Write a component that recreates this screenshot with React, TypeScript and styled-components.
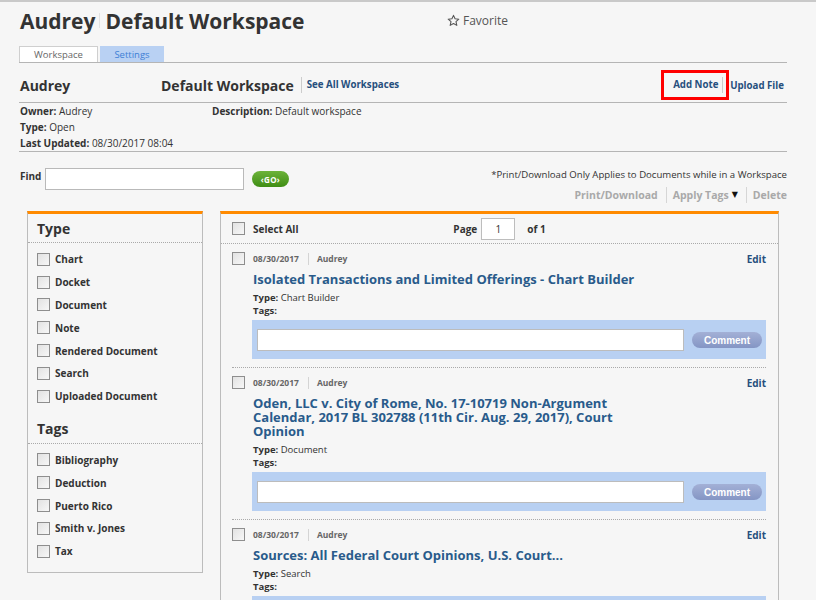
import React from "react";
import styled, { createGlobalStyle } from "styled-components";

const GlobalStyle = createGlobalStyle`
  html, body { margin: 0; padding: 0; background: #f6f6f6; }
  body {
    font-family: "Open Sans", "DejaVu Sans", sans-serif;
    color: #333;
    border-top: 2px solid #c9c9c9;
  }
  * { box-sizing: border-box; }
`;

const Page = styled.div`
  width: 816px;
  padding: 0 29px 0 19px;
`;

const Header = styled.div`
  display: grid;
  grid-template-columns: 428px 1fr;
  align-items: center;
  height: 36px;
  margin-bottom: 8px;
`;

const BigTitle = styled.h1`
  margin: 1px 0 0 1px;
  font-size: 21px;
  line-height: 30px;
  font-weight: 700;
  color: #333;
  display: flex;
  align-items: center;
`;

const TitleDivider = styled.span`
  display: inline-block;
  width: 1px;
  height: 15px;
  background: #e2e2e2;
  margin: 0 5px 0 4px;
`;

const Favorite = styled.div`
  display: flex;
  align-items: center;
  gap: 3px;
  font-size: 12px;
  color: #555;
`;

const TabBar = styled.div`
  display: flex;
  gap: 2px;
  height: 17px;
  border-bottom: 1px solid #b5b5b5;
`;

const Tab = styled.div<{ $active?: boolean }>`
  height: 16px;
  width: ${(p) => (p.$active ? "79px" : "64px")};
  display: flex;
  align-items: center;
  justify-content: center;
  font-size: 9.5px;
  background: ${(p) => (p.$active ? "#fff" : "#b9d1f3")};
  color: ${(p) => (p.$active ? "#666" : "#3d7fd6")};
  border: 1px solid ${(p) => (p.$active ? "#cfcfcf" : "#b9d1f3")};
  border-bottom: none;
`;

const WorkspaceRow = styled.div`
  display: grid;
  grid-template-columns: 142px 1fr auto;
  align-items: center;
  padding: 7px 0 2px;
  border-bottom: 1px solid #b5b5b5;
`;

const OwnerName = styled.div`
  font-size: 14px;
  font-weight: 700;
  padding-left: 1px;
`;

const WsName = styled.div`
  display: flex;
  align-items: center;
  font-size: 14px;
  font-weight: 700;
`;

const Link = styled.a`
  font-size: 9.7px;
  font-weight: 700;
  color: #264f7d;
  text-decoration: none;
`;

const SeeAll = styled(Link)`
  margin-left: 7px;
  padding-left: 5px;
  border-left: 1px solid #ccc;
  line-height: 16px;
`;

const Actions = styled.div`
  display: flex;
  align-items: center;
`;

const Highlight = styled.div`
  border: 3px solid #f00;
  height: 30px;
  width: 68px;
  display: flex;
  align-items: center;
  padding-left: 9px;
`;

const AddNote = styled(Link)`
  padding-right: 4px;
  border-right: 1px solid #ccc;
  line-height: 16px;
`;

const Upload = styled(Link)`
  margin-left: 1px;
  margin-right: 3px;
`;

const Info = styled.div`
  display: grid;
  grid-template-columns: 192px 1fr;
  grid-auto-rows: 16px;
  align-items: center;
  font-size: 10px;
  padding-left: 1px;
  border-bottom: 1px solid #b5b5b5;
`;

const InfoCell = styled.div`
  white-space: nowrap;
  b { font-weight: 700; }
`;

const FindBar = styled.div`
  display: flex;
  justify-content: space-between;
  padding-top: 15px;
`;

const FindLeft = styled.div`
  display: flex;
  align-items: flex-start;
  padding-left: 1px;
`;

const FindLabel = styled.label`
  font-size: 10px;
  font-weight: 700;
  line-height: 16px;
  margin-top: 1px;
  width: 25px;
`;

const FindInput = styled.input`
  width: 199px;
  height: 22px;
  margin-top: 1px;
  border: 1px solid #b9b9b9;
  background: #fff;
  padding: 0 4px;
  font: inherit;
`;

const GoButton = styled.button`
  margin: 4px 0 0 8px;
  width: 37px;
  height: 16px;
  border: none;
  border-radius: 8px;
  background: linear-gradient(#6cb33a, #3f8d14);
  color: #fff;
  font-family: "Open Sans", sans-serif;
  font-size: 8px;
  font-weight: 700;
  padding: 0;
  display: flex;
  align-items: center;
  justify-content: center;
  letter-spacing: 0.3px;
`;

const FindRight = styled.div`
  display: flex;
  flex-direction: column;
  align-items: flex-end;
`;

const Note = styled.div`
  font-size: 9.6px;
  line-height: 16px;
`;

const Toolbar = styled.div`
  display: flex;
  align-items: center;
  margin-top: 4px;
  height: 16px;
`;

const ToolItem = styled.span<{ $first?: boolean; $last?: boolean }>`
  font-size: 10.5px;
  font-weight: 700;
  color: #a9a9a9;
  padding: 0 ${(p) => (p.$last ? "0" : "8px")} 0 ${(p) => (p.$first ? "0" : "6px")};
  border-left: ${(p) => (p.$first ? "none" : "1px solid #d6d6d6")};
  line-height: 16px;
  display: flex;
  align-items: center;
  gap: 3px;
`;

const Caret = styled.span`
  color: #111;
  font-size: 8px;
  margin-top: -3px;
`;

const Panels = styled.div`
  display: flex;
  gap: 17px;
  margin-top: 8px;
  padding-left: 8px;
  align-items: flex-start;
`;

const Panel = styled.div`
  border: 1px solid #bcbcbc;
  border-top: 3px solid #ff8a00;
  background: #f6f6f6;
`;

const FilterPanel = styled(Panel)`
  width: 176px;
  padding-bottom: 9px;
`;

const FilterHeading = styled.div<{ $spaced?: boolean }>`
  font-size: 14px;
  font-weight: 700;
  padding: ${(p) => (p.$spaced ? "7px" : "0")} 9px 0;
  height: ${(p) => (p.$spaced ? "36px" : "29px")};
  display: flex;
  align-items: center;
  border-bottom: 1px dotted #aaa;
`;

const FilterList = styled.div`
  padding: 5px 9px 0;
`;

const FilterRow = styled.label`
  display: flex;
  align-items: center;
  gap: 5px;
  height: 22.8px;
  font-size: 10px;
  font-weight: 700;
  color: #333;
`;

const Box = styled.span`
  display: inline-block;
  width: 13px;
  height: 13px;
  flex: none;
  border: 1px solid #8e8e8e;
  background: linear-gradient(135deg, #e2e2e2, #f7f7f7);
`;

const ResultsPanel = styled(Panel)`
  width: 559px;
  border-bottom: none;
`;

const ResultsHead = styled.div`
  display: grid;
  grid-template-columns: 1fr auto 1fr;
  align-items: center;
  height: 30px;
  padding: 0 11px;
  border-bottom: 1px dotted #aaa;
`;

const SelectAll = styled.label`
  display: flex;
  align-items: center;
  gap: 8px;
  font-size: 10px;
  font-weight: 700;
`;

const Pager = styled.div`
  display: flex;
  align-items: center;
  font-size: 10px;
  font-weight: 700;
`;

const PageInput = styled.input`
  width: 34px;
  height: 22px;
  margin: 0 12px 0 4px;
  border: 1px solid #bdbdbd;
  background: #fff;
  text-align: center;
  font-family: "Open Sans", sans-serif;
  font-size: 10px;
  color: #333;
  padding: 0;
`;

const ItemList = styled.div`
  padding: 0 12px 0 11px;
`;

const Item = styled.div`
  display: flex;
  gap: 7px;
  padding: 8px 0 8px;
  border-bottom: 1px dotted #aaa;
`;

const ItemBody = styled.div`
  flex: 1;
  min-width: 0;
`;

const Meta = styled.div`
  display: flex;
  align-items: center;
  height: 13px;
  font-size: 8.5px;
  font-weight: 700;
  color: #666;
  margin-left: 1px;
`;

const MetaSep = styled.span`
  width: 1px;
  height: 12px;
  background: #d4d4d4;
  margin: 0 8px 0 9px;
`;

const Edit = styled(Link)`
  margin-left: auto;
  font-size: 10px;
`;

const ItemTitle = styled.a`
  display: block;
  max-width: 395px;
  margin: 7px 0 5px 1px;
  font-size: 13px;
  line-height: 14px;
  font-weight: 700;
  color: #295b8b;
  text-decoration: none;
`;

const Field = styled.div`
  font-size: 9.5px;
  line-height: 13px;
  margin-left: 1px;
  b { font-weight: 700; }
`;

const CommentBox = styled.div`
  margin-top: 3px;
  background: #b8d0f2;
  display: flex;
  align-items: center;
  gap: 8px;
  padding: 9px 4px 8px 5px;
`;

const CommentInput = styled.input`
  flex: 1;
  height: 22px;
  border: 1px solid #bcbcbc;
  background: #fff;
  padding: 0 4px;
`;

const CommentButton = styled.button`
  width: 70px;
  height: 16px;
  border: none;
  border-radius: 8px;
  background: linear-gradient(#a3b0d6, #8495c4);
  color: #fff;
  font-family: "Liberation Sans", Arial, sans-serif;
  font-size: 10px;
  font-weight: 700;
  padding: 0;
`;

const StarIcon = () => (
  <svg width="13" height="13" viewBox="0 0 24 24" fill="none" stroke="#555" strokeWidth="2" strokeLinejoin="round">
    <polygon points="12 2.5 14.9 8.9 21.8 9.6 16.6 14.2 18.1 21 12 17.5 5.9 21 7.4 14.2 2.2 9.6 9.1 8.9" />
  </svg>
);

const types = ["Chart", "Docket", "Document", "Note", "Rendered Document", "Search", "Uploaded Document"];
const tags = ["Bibliography", "Deduction", "Puerto Rico", "Smith v. Jones", "Tax"];

const items = [
  { title: "Isolated Transactions and Limited Offerings - Chart Builder", type: "Chart Builder" },
  {
    title: "Oden, LLC v. City of Rome, No. 17-10719 Non-Argument Calendar, 2017 BL 302788 (11th Cir. Aug. 29, 2017), Court Opinion",
    type: "Document",
  },
  { title: "Sources: All Federal Court Opinions, U.S. Court...", type: "Search" },
];

export default function App() {
  return (
    <>
      <GlobalStyle />
      <Page>
        <Header>
          <BigTitle>
            Audrey<TitleDivider />Default Workspace
          </BigTitle>
          <Favorite>
            <StarIcon />
            Favorite
          </Favorite>
        </Header>
        <TabBar>
          <Tab $active>Workspace</Tab>
          <Tab>Settings</Tab>
        </TabBar>
        <WorkspaceRow>
          <OwnerName>Audrey</OwnerName>
          <WsName>
            Default Workspace
            <SeeAll href="#">See All Workspaces</SeeAll>
          </WsName>
          <Actions>
            <Highlight>
              <AddNote href="#">Add Note</AddNote>
            </Highlight>
            <Upload href="#">Upload File</Upload>
          </Actions>
        </WorkspaceRow>
        <Info>
          <InfoCell>
            <b>Owner:</b> Audrey
          </InfoCell>
          <InfoCell>
            <b>Description:</b> Default workspace
          </InfoCell>
          <InfoCell>
            <b>Type:</b> Open
          </InfoCell>
          <InfoCell />
          <InfoCell>
            <b>Last Updated:</b> 08/30/2017 08:04
          </InfoCell>
          <InfoCell />
        </Info>
        <FindBar>
          <FindLeft>
            <FindLabel>Find</FindLabel>
            <FindInput />
            <GoButton>‹GO›</GoButton>
          </FindLeft>
          <FindRight>
            <Note>*Print/Download Only Applies to Documents while in a Workspace</Note>
            <Toolbar>
              <ToolItem $first>Print/Download</ToolItem>
              <ToolItem>
                Apply Tags <Caret>▼</Caret>
              </ToolItem>
              <ToolItem $last>Delete</ToolItem>
            </Toolbar>
          </FindRight>
        </FindBar>
        <Panels>
          <FilterPanel>
            <FilterHeading>Type</FilterHeading>
            <FilterList>
              {types.map((t) => (
                <FilterRow key={t}>
                  <Box />
                  {t}
                </FilterRow>
              ))}
            </FilterList>
            <FilterHeading $spaced>Tags</FilterHeading>
            <FilterList>
              {tags.map((t) => (
                <FilterRow key={t}>
                  <Box />
                  {t}
                </FilterRow>
              ))}
            </FilterList>
          </FilterPanel>
          <ResultsPanel>
            <ResultsHead>
              <SelectAll>
                <Box />
                Select All
              </SelectAll>
              <Pager>
                Page
                <PageInput defaultValue="1" />
                of 1
              </Pager>
              <span />
            </ResultsHead>
            <ItemList>
              {items.map((it, i) => (
                <Item key={i}>
                  <Box />
                  <ItemBody>
                    <Meta>
                      08/30/2017
                      <MetaSep />
                      Audrey
                      <Edit href="#">Edit</Edit>
                    </Meta>
                    <ItemTitle href="#">{it.title}</ItemTitle>
                    <Field>
                      <b>Type:</b> {it.type}
                    </Field>
                    <Field>
                      <b>Tags:</b>
                    </Field>
                    <CommentBox>
                      <CommentInput />
                      <CommentButton>Comment</CommentButton>
                    </CommentBox>
                  </ItemBody>
                </Item>
              ))}
            </ItemList>
          </ResultsPanel>
        </Panels>
      </Page>
    </>
  );
}
